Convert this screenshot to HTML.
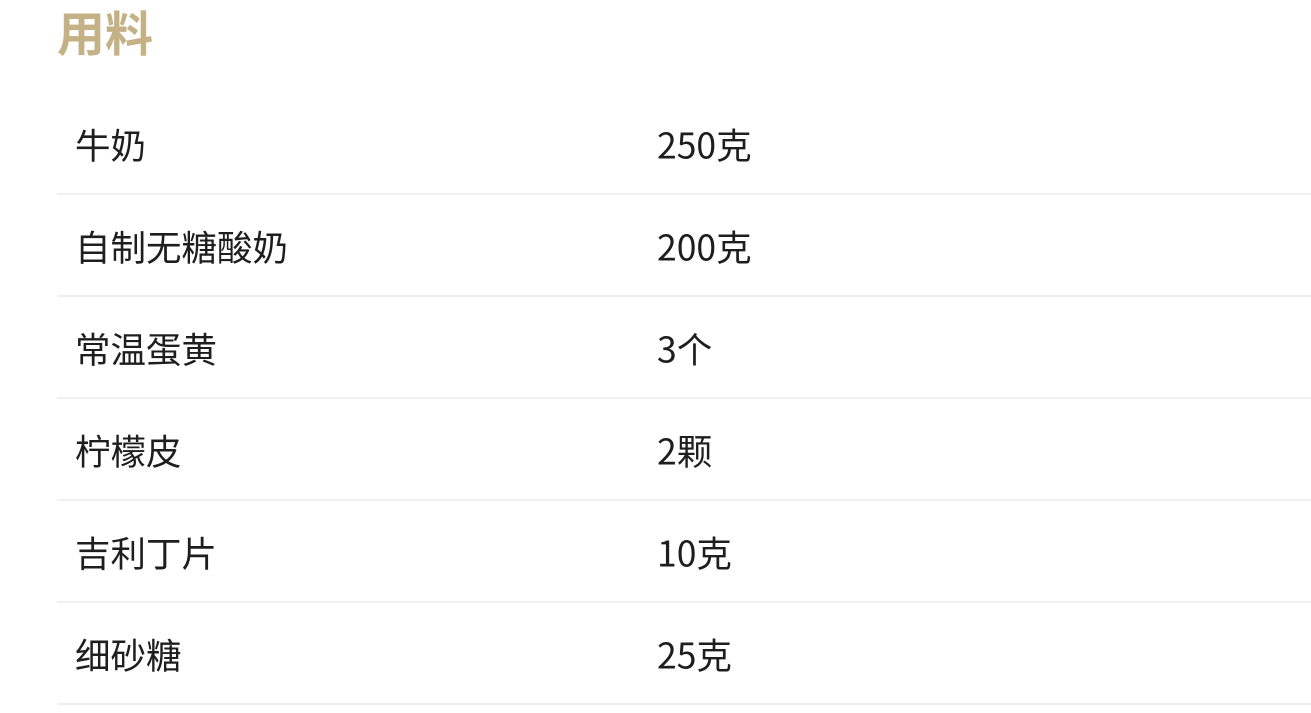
<!DOCTYPE html>
<html><head><meta charset="utf-8"><style>
body{margin:0;background:#fff;width:1311px;height:713px;overflow:hidden;font-family:"Noto Sans CJK SC","Liberation Sans",sans-serif;}
h2{position:absolute;left:57px;top:-1px;margin:0;font-size:48px;line-height:62px;color:#c4b185;font-weight:bold;}
.t{position:absolute;left:57px;top:93px;width:1260px;}
.r{height:100px;border-bottom:2px solid #efefef;position:relative;font-size:35.5px;color:#1e1e1e;}
.r span{position:absolute;top:50%;transform:translateY(-46%);line-height:40px;}
.a{left:18px}.b{left:600px}
</style></head><body>
<h2>用料</h2>
<div class="t">
<div class="r"><span class="a">牛奶</span><span class="b">250克</span></div>
<div class="r"><span class="a">自制无糖酸奶</span><span class="b">200克</span></div>
<div class="r"><span class="a">常温蛋黄</span><span class="b">3个</span></div>
<div class="r"><span class="a">柠檬皮</span><span class="b">2颗</span></div>
<div class="r"><span class="a">吉利丁片</span><span class="b">10克</span></div>
<div class="r"><span class="a">细砂糖</span><span class="b">25克</span></div>
</div>
</body></html>
